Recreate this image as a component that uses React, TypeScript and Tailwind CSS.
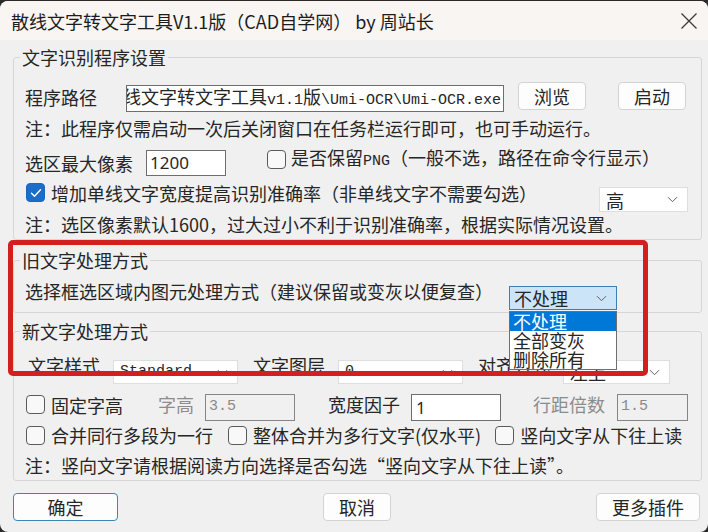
import React from 'react';

const body = "font-['Noto_Sans_CJK_SC',sans-serif] text-[18px] text-[#262626]";
const mono = "font-['Liberation_Mono','Noto_Sans_CJK_SC',monospace] text-[15px]";

function Checkbox({ checked = false }: { checked?: boolean }) {
  return (
    <span
      className={`flex h-[19px] w-[19px] shrink-0 items-center justify-center rounded-[4px] border ${
        checked ? 'border-[#1a66bd] bg-[#1b6ec8]' : 'border-[#5a5a5a] bg-[#f8f8f8]'
      }`}
    >
      {checked && (
        <svg width="12" height="10" viewBox="0 0 12 10" fill="none">
          <path d="M1.5 5.2l3 3 6-6.4" stroke="#fff" strokeWidth="1.4" strokeLinecap="round" strokeLinejoin="round" />
        </svg>
      )}
    </span>
  );
}

function Chevron() {
  return (
    <svg width="11" height="7" viewBox="0 0 11 7" fill="none" className="shrink-0">
      <path d="M1 1.2l4.5 4.5L10 1.2" stroke="#5f5f5f" strokeWidth="1" />
    </svg>
  );
}

function Combo({ value, className = '', latin = false }: { value: string; className?: string; latin?: boolean }) {
  return (
    <div
      className={`flex h-[24px] items-center justify-between border border-[#dedede] bg-white pl-[6px] pr-[9px] leading-[20px] ${className}`}
    >
      <span className={latin ? mono : ''}>{value}</span>
      <Chevron />
    </div>
  );
}

function Button({ label, className = '', primary = false }: { label: string; className?: string; primary?: boolean }) {
  return (
    <button
      className={`flex h-[28px] items-center justify-center rounded-[4px] border bg-[#fdfdfd] leading-[20px] ${
        primary ? 'border-[#3b86b4]' : 'border-[#d3d3d3]'
      } ${className}`}
    >
      {label}
    </button>
  );
}

function CheckItem({ label, checked = false, className = '' }: { label: string; checked?: boolean; className?: string }) {
  return (
    <div className={`flex h-[19px] items-center ${className}`}>
      <Checkbox checked={checked} />
      <span className="ml-[6px] whitespace-nowrap leading-[20px]">{label}</span>
    </div>
  );
}

export default function App() {
  return (
    <div className="h-[532px] w-[708px] overflow-hidden bg-[#2a2a2a] pt-px">
      <div className={`flex h-[531px] flex-col overflow-hidden rounded-[8px] bg-[#f0f0f0] ${body}`}>
        {/* title bar */}
        <div className="flex h-[39px] shrink-0 items-center justify-between bg-[#f9f5f2] pl-[11px] pr-[10px]">
          <span className="whitespace-nowrap text-[18px] leading-[24px] text-[#1c1c1c]">
            散线文字转文字工具V1.1版（CAD自学网） by 周站长
          </span>
          <svg width="18" height="18" viewBox="0 0 18 18" fill="none">
            <path d="M1.5 1.5l15 15M16.5 1.5l-15 15" stroke="#3a3a3a" strokeWidth="1.3" />
          </svg>
        </div>

        <div className="relative flex-1">
          {/* group 1 */}
          <fieldset className="ml-[13px] mr-[6px] mt-[7px] rounded-[3px] border border-[#d6d6d6] px-[6px] pb-[5px]">
            <legend className="px-[2px] leading-[21px]">文字识别程序设置</legend>

            <div className="mt-[14px] flex h-[30px] items-start pl-[5px]">
              <span className="mt-[5px] leading-[20px]">程序路径</span>
              <div className="ml-[29px] mt-[3px] flex h-[27px] w-[378px] items-center justify-end overflow-hidden border border-[#6e6e6e] bg-white pr-[2px]">
                <span className="whitespace-nowrap leading-[20px]">
                  散线文字转文字工具<span className={mono}>v1.1</span>版
                  <span className={mono}>{'\\Umi-OCR\\Umi-OCR.exe'}</span>
                </span>
              </div>
              <Button label="浏览" className="ml-[14px] w-[68px]" />
              <Button label="启动" className="ml-[32px] w-[68px]" />
            </div>

            <p className="mt-[6px] whitespace-nowrap pl-[5px] leading-[20px]">
              注：此程序仅需启动一次后关闭窗口在任务栏运行即可，也可手动运行。
            </p>

            <div className="mt-[12px] flex h-[26px] items-start pl-[5px]">
              <span className="mt-[3px] leading-[20px]">选区最大像素</span>
              <div className="ml-[13px] flex h-[26px] w-[80px] items-center border border-[#6e6e6e] bg-white pl-[3px]">
                <span className="font-['Noto_Sans',sans-serif] text-[17px] leading-[20px]">1200</span>
              </div>
              <div className="ml-[41px] flex h-[18px] items-center">
                <Checkbox />
                <span className="ml-[5px] whitespace-nowrap leading-[20px]">
                  是否保留<span className={mono}>PNG</span>（一般不选，路径在命令行显示）
                </span>
              </div>
            </div>

            <div className="mt-[7px] flex h-[29px] items-start pl-[5px]">
              <CheckItem checked label="增加单线文字宽度提高识别准确率（非单线文字不需要勾选）" className="ml-[1px]" />
              <Combo value="高" className="ml-auto mr-[7px] mt-[4px] h-[25px] w-[89px]" />
            </div>

            <p className="mt-[2px] whitespace-nowrap pl-[5px] leading-[20px]">
              注：选区像素默认1600，过大过小不利于识别准确率，根据实际情况设置。
            </p>
          </fieldset>

          {/* group 2 */}
          <fieldset className="ml-[13px] mr-[6px] mt-[10px] rounded-[3px] border border-[#d6d6d6] px-[6px] pb-[2px]">
            <legend className="px-[2px] leading-[21px]">旧文字处理方式</legend>
            <div className="mt-[10px] flex h-[29px] items-start pl-[5px]">
              <span className="whitespace-nowrap leading-[20px]">选择框选区域内图元处理方式（建议保留或变灰以便复查）</span>
              <div className="relative ml-auto mr-[78px] mt-[5px]">
                <div className="flex h-[24px] w-[108px] items-center justify-between border border-[#3d7fb5] bg-[#cce4f7] pl-[4px] pr-[9px] leading-[20px]">
                  <span>不处理</span>
                  <Chevron />
                </div>
                <div className="absolute left-0 top-full z-10 mt-px w-[108px] border border-[#6f6f6f] bg-white leading-[19px]">
                  <div className="bg-[#0078d7] pl-[3px] text-white">不处理</div>
                  <div className="pl-[3px]">全部变灰</div>
                  <div className="pl-[3px]">删除所有</div>
                </div>
              </div>
            </div>
          </fieldset>

          {/* group 3 */}
          <fieldset className="ml-[13px] mr-[6px] mt-[8px] rounded-[3px] border border-[#d6d6d6] px-[6px] pb-[5px]">
            <legend className="px-[2px] leading-[21px]">新文字处理方式</legend>

            <div className="mt-[13px] flex h-[29px] items-start pl-[5px]">
              <span className="ml-[3px] leading-[20px]">文字样式</span>
              <Combo value="Standard" latin className="ml-[13px] mt-[5px] w-[125px]" />
              <span className="ml-[15px] leading-[20px]">文字图层</span>
              <Combo value="0" latin className="ml-[13px] mt-[5px] w-[125px]" />
              <span className="ml-[15px] leading-[20px]">对齐方式</span>
              <Combo value="左上" className="ml-[13px] mt-[5px] w-[107px]" />
            </div>

            <div className="mt-[10px] flex h-[27px] items-start pl-[5px]">
              <CheckItem label="固定字高" className="ml-[1px] mt-px" />
              <span className="ml-[35px] leading-[20px] text-[#8c8c8c]">字高</span>
              <div className="ml-[11px] flex h-[27px] w-[90px] items-center border border-[#858585] pl-[3px]">
                <span className={`${mono} text-[#8a8a8a]`}>3.5</span>
              </div>
              <span className="ml-[33px] leading-[20px]">宽度因子</span>
              <div className="ml-[11px] flex h-[27px] w-[90px] items-center border border-[#6e6e6e] bg-white pl-[4px]">
                <span className="font-['Noto_Sans',sans-serif] text-[17px] leading-[20px]">1</span>
              </div>
              <span className="ml-[32px] leading-[20px] text-[#8c8c8c]">行距倍数</span>
              <div className="ml-[12px] flex h-[27px] w-[71px] items-center border border-[#858585] pl-[3px]">
                <span className={`${mono} text-[#8a8a8a]`}>1.5</span>
              </div>
            </div>

            <div className="mt-[4px] flex h-[20px] items-center pl-[5px]">
              <CheckItem label="合并同行多段为一行" className="ml-[1px]" />
              <CheckItem label="整体合并为多行文字(仅水平)" className="ml-[15px]" />
              <CheckItem label="竖向文字从下往上读" className="ml-[14px]" />
            </div>

            <p className="mt-[10px] whitespace-nowrap pl-[5px] leading-[20px]">
              注：竖向文字请根据阅读方向选择是否勾选“竖向文字从下往上读”。
            </p>
          </fieldset>

          {/* buttons */}
          <div className="mt-[12px] flex h-[28px] items-start">
            <Button label="确定" primary className="ml-[13px] w-[105px]" />
            <Button label="取消" className="ml-[205px] w-[68px]" />
            <Button label="更多插件" className="ml-[205px] w-[104px]" />
          </div>

          {/* red annotation frame */}
          <div className="pointer-events-none absolute left-[8px] top-[200px] z-20 h-[136px] w-[640px] rounded-[5px] border-[5px] border-[#d41f1f]" />
        </div>
      </div>
    </div>
  );
}
